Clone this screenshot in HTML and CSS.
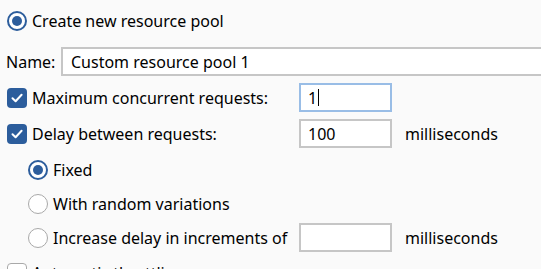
FILE: index.html
```html
<!DOCTYPE html>
<html>
<head>
<meta charset="utf-8">
<link rel="stylesheet" href="styles.css">
</head>
<body>
<div class="form">
  <div class="row r1">
    <span class="radio on"></span>
    <span class="lbl">Create new resource pool</span>
  </div>
  <div class="row r2">
    <span class="name-lbl">Name:</span>
    <div class="field wide">Custom resource pool 1</div>
  </div>
  <div class="row r3">
    <span class="check on"><svg viewBox="0 0 20 20" width="20" height="20"><path d="M5.5 10.3 L8.6 13.3 L14.6 6.8" fill="none" stroke="#fff" stroke-width="2" stroke-linecap="round" stroke-linejoin="round"/></svg></span>
    <span class="lbl main">Maximum concurrent requests:</span>
    <div class="field num focus">1<span class="caret"></span></div>
  </div>
  <div class="row r4">
    <span class="check on"><svg viewBox="0 0 20 20" width="20" height="20"><path d="M5.5 10.3 L8.6 13.3 L14.6 6.8" fill="none" stroke="#fff" stroke-width="2" stroke-linecap="round" stroke-linejoin="round"/></svg></span>
    <span class="lbl main">Delay between requests:</span>
    <div class="field num">100</div>
    <span class="unit">milliseconds</span>
  </div>
  <div class="row r5 sub">
    <span class="radio on"></span>
    <span class="lbl">Fixed</span>
  </div>
  <div class="row r6 sub">
    <span class="radio"></span>
    <span class="lbl">With random variations</span>
  </div>
  <div class="row r7 sub">
    <span class="radio"></span>
    <span class="lbl subl">Increase delay in increments of</span>
    <div class="field num"></div>
    <span class="unit">milliseconds</span>
  </div>
  <div class="row r8">
    <span class="check"></span>
    <span class="lbl">Automatic throttling</span>
  </div>
</div>
</body>
</html>
```

FILE: styles.css
```css
html, body {
  margin: 0;
  padding: 0;
  background: #fafafa;
  overflow: hidden;
  width: 541px;
  height: 269px;
}
body {
  font-family: "Noto Sans", "Open Sans", sans-serif;
  font-size: 16px;
  color: #000;
}
.form {
  display: flex;
  flex-direction: column;
  padding-top: 6px;
}
.row {
  display: flex;
  align-items: center;
  height: 29px;
  padding-left: 7px;
  flex-shrink: 0;
}
.r2 { margin-top: 12px; padding-left: 6px; }
.r3 { margin-top: 7px; }
.r4 { margin-top: 7px; }
.r5 { margin-top: 7px; }
.r6 { margin-top: 5px; }
.r7 { margin-top: 5px; }
.r8 { margin-top: 6px; }
.sub { padding-left: 28px; }

.lbl { margin-left: 5px; white-space: nowrap; }
.main { width: 267px; }
.subl { width: 246px; }

.name-lbl { width: 55px; }

.field {
  box-sizing: border-box;
  height: 29px;
  border: 2px solid #c6c6c6;
  background: #fff;
  padding-left: 7px;
  display: flex;
  align-items: center;
  white-space: nowrap;
}
.wide {
  flex: 1;
  margin-right: -20px;
  padding-left: 8px;
}
.num { width: 93px; }
.focus { border-color: #99bde6; }
.caret {
  display: inline-block;
  width: 1px;
  height: 17px;
  background: #000;
  margin-left: 1px;
}
.unit { margin-left: 13px; }

.radio {
  box-sizing: border-box;
  width: 20px;
  height: 20px;
  border-radius: 50%;
  border: 1.5px solid #a9a9a9;
  background: #fff;
  flex-shrink: 0;
  display: flex;
  align-items: center;
  justify-content: center;
}
.radio.on {
  border: 2px solid #2c5d9c;
}
.radio.on::after {
  content: "";
  width: 10px;
  height: 10px;
  border-radius: 50%;
  background: #2c5d9c;
}
.check {
  box-sizing: border-box;
  width: 20px;
  height: 20px;
  border-radius: 4px;
  border: 1.5px solid #a9a9a9;
  background: #fff;
  flex-shrink: 0;
  display: flex;
}
.check.on {
  background: #2c5d9c;
  border: none;
}
```
